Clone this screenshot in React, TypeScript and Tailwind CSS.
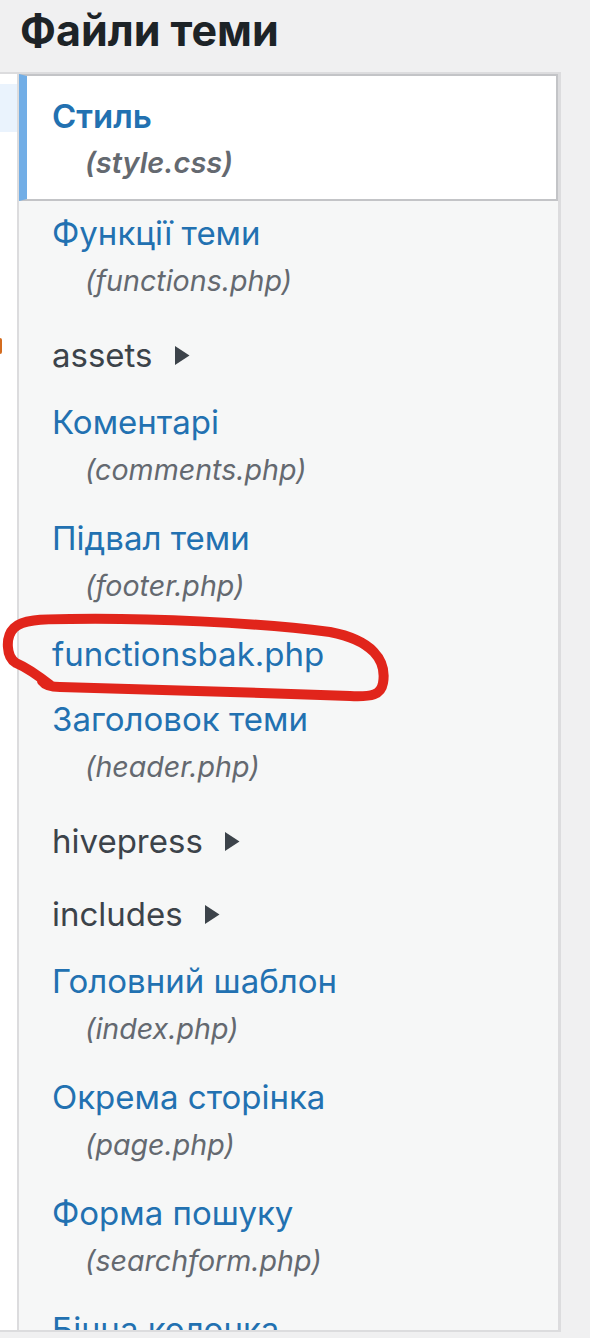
import React from "react";

type Item =
  | { kind: "file"; title: string; sub?: string; selected?: boolean }
  | { kind: "folder"; title: string };

const items: Item[] = [
  { kind: "file", title: "Стиль", sub: "(style.css)", selected: true },
  { kind: "file", title: "Функції теми", sub: "(functions.php)" },
  { kind: "folder", title: "assets" },
  { kind: "file", title: "Коментарі", sub: "(comments.php)" },
  { kind: "file", title: "Підвал теми", sub: "(footer.php)" },
  { kind: "file", title: "functionsbak.php" },
  { kind: "file", title: "Заголовок теми", sub: "(header.php)" },
  { kind: "folder", title: "hivepress" },
  { kind: "folder", title: "includes" },
  { kind: "file", title: "Головний шаблон", sub: "(index.php)" },
  { kind: "file", title: "Окрема сторінка", sub: "(page.php)" },
  { kind: "file", title: "Форма пошуку", sub: "(searchform.php)" },
  { kind: "file", title: "Бічна колонка", sub: "(sidebar.php)" },
];

const font = { fontFamily: 'Inter, "Noto Sans", "Liberation Sans", sans-serif' };

function Triangle() {
  return (
    <svg width="16" height="19" viewBox="0 0 16 19" className="ml-[21px]">
      <polygon points="1,0 15.5,9.5 1,19" fill="#3c434a" />
    </svg>
  );
}

function Row({ item }: { item: Item }) {
  if (item.kind === "folder") {
    return (
      <div className="pl-[33px] pt-[15px] pb-[12px] flex items-center box-border">
        <span className="text-[33px] leading-[46px] text-[#3c434a]">{item.title}</span>
        <Triangle />
      </div>
    );
  }
  if (item.selected) {
    return (
      <div className="bg-white border-2 border-[#c3c4c7] border-l-[8px] border-l-[#72aee6] pl-[25px] pt-[17px] pb-[13px]">
        <div className="text-[33px] leading-[47px] font-semibold text-[#2271b1]">{item.title}</div>
        <div className="text-[29px] leading-[46px] italic font-semibold text-[#646970] pl-[33px]">{item.sub}</div>
      </div>
    );
  }
  return (
    <div className={`pl-[33px] pt-[9px] ${item.sub ? "pb-[13px]" : "pb-[9px]"}`}>
      <div className="text-[33px] leading-[47px] text-[#2271b1] whitespace-nowrap">{item.title}</div>
      {item.sub && (
        <div className="text-[28.6px] leading-[47px] italic text-[#646970] pl-[33px] whitespace-nowrap">{item.sub}</div>
      )}
    </div>
  );
}

export default function App() {
  return (
    <div className="relative w-[590px] h-[1338px] bg-[#f0f0f1] overflow-hidden" style={font}>
      <div className="h-[72px] pl-[20px] flex items-start">
        <h2 className="text-[43px] leading-[43px] font-bold text-[#1d2327] mt-[9px] whitespace-nowrap">Файли теми</h2>
      </div>
      <div className="flex h-[1260px] border-y-2 border-[#dcdcde] w-[561px] box-border">
        <div className="w-[17px] bg-white flex flex-col shrink-0">
          <div className="h-[10px]" />
          <div className="h-[48px] bg-[#eaf3fd]" />
          <div className="h-[206px]" />
          <div className="h-[16px] w-[2px] bg-[#d46c1f] rounded-r-sm" />
        </div>
        <div className="flex-1 border-l-2 border-r-[3px] border-[#dcdcde] bg-[#f6f7f7] overflow-hidden">
          {items.map((it, i) => (
            <Row key={i} item={it} />
          ))}
        </div>
      </div>
      <svg
        className="absolute left-0 top-0 pointer-events-none"
        width="590"
        height="1338"
        viewBox="0 0 590 1338"
      >
        <path
          d="M 50 685 C 40 677, 30 669, 16 663 C 6 657, 5 637, 14 628 C 22 620, 40 619, 70 619 C 150 618, 250 622, 330 632 C 372 640, 387 660, 383 683 C 381 695, 372 697, 350 696 C 260 693, 150 689, 60 687 C 50 687, 45 685, 42 681"
          fill="none"
          stroke="#e1251b"
          strokeWidth="10"
          strokeLinecap="round"
          strokeLinejoin="round"
        />
      </svg>
    </div>
  );
}
